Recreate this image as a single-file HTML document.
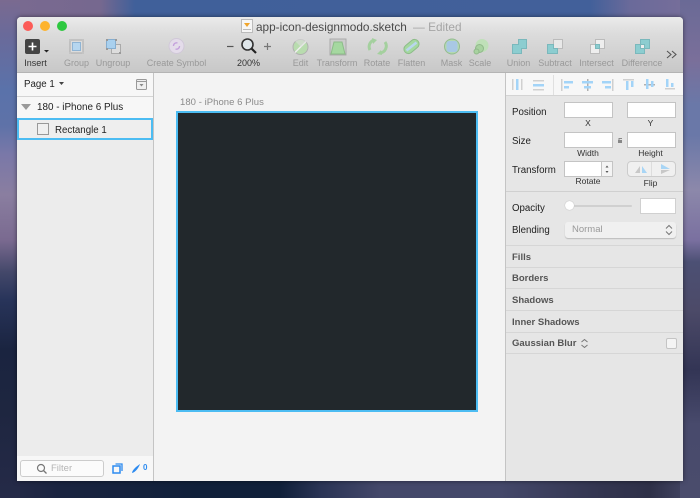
<!DOCTYPE html>
<html><head><meta charset="utf-8"><style>
html,body{margin:0;padding:0}
body{width:700px;height:498px;overflow:hidden;position:relative;font-family:"Liberation Sans",sans-serif;background:#2b3153}
.a{position:absolute;white-space:nowrap}
.st{position:absolute}
.win{position:absolute;left:17px;top:17px;width:666px;height:464px;background:#f3f3f3;border-radius:4px 4px 2px 2px;box-shadow:0 0 5px rgba(0,0,0,.5);overflow:hidden}
.tb{position:absolute;left:17px;top:17px;width:666px;height:55px;background:linear-gradient(#ebebeb,#dcdcdc 30%,#c8c8c8);border-bottom:1px solid #b4b4b4;border-radius:4px 4px 0 0}
.tl{font-size:9px;color:#999;top:58px;transform:translateX(-50%)}
.dot{position:absolute;width:10px;height:10px;border-radius:50%;top:21px}
.lb{font-size:9.7px;color:#222}
.sub{font-size:8.500px;color:#333;transform:translateX(-50%)}
.in{position:absolute;background:#fff;border:1px solid #c4c4c4;box-sizing:border-box;height:16px}
.sec{position:absolute;left:506px;width:177px;height:22px;border-bottom:1px solid #d6d6d6;box-sizing:border-box}
.sec span{position:absolute;left:6px;top:6px;font-size:9.500px;font-weight:bold;color:#555}
</style></head><body>
<div class="st" style="left:0;top:0;width:700px;height:20px;background:linear-gradient(90deg,#7a6a90 0,#76688f 100px,#40609a 135px,#42609a 590px,#6a6a9a 630px,#7a6f9a 700px)"></div>
<div class="st" style="left:0;top:478px;width:700px;height:20px;background:linear-gradient(90deg,#252a48 0,#1a2440 60px,#10203a 200px,#10203a 280px,#2a3455 320px,#44486a 380px,#44486a 500px,#333550 600px,#2e3048 650px,#4a4c6c 700px)"></div>
<div class="st" style="left:0;top:0;width:20px;height:498px;background:linear-gradient(180deg,#7a6a90 0,#6a6a9a 35px,#5a72aa 90px,#5e72a8 125px,#7a78a8 155px,#8a7ea0 195px,#7a6a90 240px,#44486a 272px,#28345a 300px,#1a2440 350px,#1e2640 410px,#252a48 498px)"></div>
<div class="st" style="left:680px;top:0;width:20px;height:498px;background:linear-gradient(180deg,#6a6a96 0,#7a6f9a 60px,#6a78a8 105px,#6a78a8 135px,#8c88aa 190px,#7a70a0 240px,#4c5074 262px,#4c4a68 310px,#333555 370px,#484a6c 425px,#4a4c6c 498px)"></div>
<div class="win"></div>
<div class="tb"></div>
<div class="dot" style="left:23px;background:#fc5b57"></div>
<div class="dot" style="left:40px;background:#fdb32e"></div>
<div class="dot" style="left:57px;background:#2ec840"></div>

<svg class="a" style="left:241px;top:19px" width="12" height="14"><rect x=".5" y=".5" width="11" height="13" fill="#f6f6f6" stroke="#bbb"/><path d="M3 4h6l-3 4z" fill="#f0a52c"/><rect x="2" y="10" width="8" height="1" fill="#bbb"/></svg>
<div class="a" style="left:256px;top:20px;font-size:11.800px;color:#4a4a4a">app-icon-designmodo.sketch</div>
<div class="a" style="left:413px;top:20px;font-size:11.800px;color:#a5a5a5">— Edited</div>

<!-- toolbar icons -->
<svg class="a" style="left:0;top:0" width="700" height="72">
<rect x="25" y="39" width="15" height="15" rx="2" fill="#444"/><path d="M32.500 42.500v8M28.500 46.500h8" stroke="#fff" stroke-width="1.600"/><path d="M44 50h5l-2.500 2.500z" fill="#222"/>
<rect x="70" y="40" width="13" height="13" fill="#dcdcdc" stroke="#aaa"/><rect x="72.500" y="42.500" width="8" height="8" fill="#b6d6ef" stroke="#8fb4d4"/>
<g fill="#c4c4c4"><rect x="69" y="39" width="2" height="2"/><rect x="82" y="39" width="2" height="2"/><rect x="69" y="52" width="2" height="2"/><rect x="82" y="52" width="2" height="2"/></g>
<rect x="111.500" y="44.500" width="9" height="9" fill="#ddd" stroke="#aaa"/><rect x="106.500" y="39.500" width="9" height="9" fill="#a9d0ee" stroke="#86aed0"/>
<g fill="#999"><rect x="106" y="39" width="2" height="2"/><rect x="115" y="39" width="2" height="2"/><rect x="106" y="48" width="2" height="2"/><rect x="119" y="52" width="2" height="2"/></g>
<circle cx="176.500" cy="46" r="7.500" fill="#e4dcea" stroke="#d0c8d8"/><path d="M173.500 46a3 3 0 0 1 4-3M179.500 46a3 3 0 0 1-4 3" fill="none" stroke="#c4a0dc" stroke-width="1.300"/>
<path d="M227 46.500h6.500" stroke="#555" stroke-width="1.200"/>
<circle cx="247.500" cy="44.500" r="5.500" fill="#dfe6ea" stroke="#333" stroke-width="1.600"/><path d="M251.500 48.500l4.500 4.500" stroke="#222" stroke-width="2.200"/>
<path d="M264 46.500h7M267.500 43v7" stroke="#777" stroke-width="1.200"/>
<circle cx="300.500" cy="47" r="7.500" fill="#b8dcae" stroke="#b0b0b0"/><path d="M295 52.500l11-11" stroke="#eee" stroke-width="1.500"/><path d="M301 47l6-6a8 8 0 0 0-12 0z" fill="#dcdcdc" opacity=".6"/>
<rect x="330" y="39" width="16" height="16" fill="#ccc" stroke="#aaa"/><path d="M331 54l3-12h8l3 12z" fill="#a5d8a0" stroke="#8cbc88"/>
<path d="M370 50a7 7 0 0 1 4-10M385 42a7 7 0 0 1-5 11" fill="none" stroke="#a4d09e" stroke-width="3"/><path d="M373 44l4-4-5-2zM381 50l-4 4 5 1z" fill="#a4d09e"/>
<rect x="403" y="42" width="17" height="9" rx="4.500" fill="#a5d8a0" stroke="#8cbc88" transform="rotate(-40 411.500 46.500)"/><path d="M406.500 50.500l10-8" stroke="#b9d6ee" stroke-width="2.500"/>
<circle cx="452" cy="46.500" r="7.500" fill="#b4d8b0" stroke="#94bc90"/><rect x="446.500" y="41" width="11" height="11" rx="2.500" fill="#a9c8e4"/>
<circle cx="482" cy="45.500" r="6.500" fill="#bfe0b8"/><circle cx="479.500" cy="48.500" r="4" fill="#a8d2a0" stroke="#90b88a"/><circle cx="476.500" cy="51.500" r="2.500" fill="#a8d2a0" stroke="#90b88a"/>
<g stroke="#7ab8bc" fill="#8ccdd0"><path d="M518.500 39.500h8v9h-5v5h-9v-9h6z"/></g>
<rect x="553.500" y="39.500" width="9" height="9" fill="#e8e8e8" stroke="#bbb"/><path d="M547.500 44.500h6v4h4v5h-10z" fill="#8ccdd0" stroke="#7ab8bc"/>
<rect x="595.500" y="39.500" width="9" height="9" fill="#eee" stroke="#bbb"/><rect x="590.500" y="44.500" width="9" height="9" fill="#eee" stroke="#bbb"/><rect x="595.500" y="44.500" width="4" height="4" fill="#8ccdd0" stroke="#7ab8bc"/>
<rect x="640.500" y="39.500" width="9" height="9" fill="#8ccdd0" stroke="#7ab8bc"/><rect x="635.500" y="44.500" width="9" height="9" fill="#8ccdd0" stroke="#7ab8bc"/><rect x="640.500" y="44.500" width="4" height="4" fill="#eee" stroke="#7ab8bc"/>
<path d="M667 51l4 3.500-4 3.500M672 51l4 3.500-4 3.500" fill="none" stroke="#555" stroke-width="1.100"/>
</svg>
<div class="a tl" style="left:35.500px;color:#333">Insert</div>
<div class="a tl" style="left:76.500px">Group</div>
<div class="a tl" style="left:113px">Ungroup</div>
<div class="a tl" style="left:176.500px">Create Symbol</div>
<div class="a tl" style="left:248.500px;color:#333">200%</div>
<div class="a tl" style="left:300.500px">Edit</div>
<div class="a tl" style="left:337px">Transform</div>
<div class="a tl" style="left:377px">Rotate</div>
<div class="a tl" style="left:411.500px">Flatten</div>
<div class="a tl" style="left:451.500px">Mask</div>
<div class="a tl" style="left:480px">Scale</div>
<div class="a tl" style="left:518.500px">Union</div>
<div class="a tl" style="left:555px">Subtract</div>
<div class="a tl" style="left:596.500px">Intersect</div>
<div class="a tl" style="left:642px">Difference</div>

<!-- left sidebar -->
<div class="a" style="left:17px;top:73px;width:136px;height:408px;background:#ececec;border-right:1px solid #c4c4c4"></div>
<div class="a" style="left:17px;top:73px;width:136px;height:23px;background:#f7f7f7;border-bottom:1px solid #d4d4d4"></div>
<div class="a" style="left:24px;top:79px;font-size:9.700px;color:#222">Page 1</div>
<svg class="a" style="left:0;top:73px" width="153" height="23"><path d="M59 9h5l-2.500 3z" fill="#444"/><rect x="136.500" y="6.500" width="10" height="10" rx="1" fill="#efefef" stroke="#999"/><path d="M136.500 8.500h10" stroke="#999"/><path d="M139.500 11h4l-2 2.500z" fill="#888"/></svg>
<div class="a" style="left:17px;top:97px;width:136px;height:21px;background:#f7f7f7"></div>
<svg class="a" style="left:20px;top:104px" width="12" height="7"><path d="M1 0h10l-5 6z" fill="#9a9a9a"/></svg>
<div class="a" style="left:37px;top:102px;font-size:9.900px;color:#222">180 - iPhone 6 Plus</div>
<div class="a" style="left:17px;top:118px;width:136px;height:22px;box-sizing:border-box;background:#eee;border:2px solid #4cbcf2"></div>
<div class="a" style="left:37px;top:123px;width:10px;height:10px;background:#f0f0f0;border:1px solid #999"></div>
<div class="a" style="left:55px;top:125px;font-size:9.700px;color:#222">Rectangle 1</div>
<div class="a" style="left:17px;top:456px;width:136px;height:25px;background:#f7f7f7"></div>
<div class="a" style="left:20px;top:460px;width:84px;height:17px;box-sizing:border-box;background:#fbfbfb;border:1px solid #ccc;border-radius:3px"></div>
<svg class="a" style="left:36px;top:463px" width="12" height="12"><circle cx="5" cy="5" r="3.500" fill="none" stroke="#777" stroke-width="1.200"/><path d="M7.500 7.500l3 3" stroke="#777" stroke-width="1.300"/></svg>
<div class="a" style="left:51px;top:463px;font-size:9.500px;color:#b5b5b5">Filter</div>
<svg class="a" style="left:111px;top:462px" width="40" height="14"><rect x="2" y="4" width="7" height="7" fill="none" stroke="#2d8bf0" stroke-width="1.500"/><path d="M4.500 2h6.500v7" fill="none" stroke="#2d8bf0" stroke-width="1.300"/><path d="M21 11c0-3 5-7 8-9-1 3-4 8-8 9z" fill="#2d8bf0"/></svg>
<div class="a" style="left:143px;top:463px;font-size:8px;font-weight:bold;color:#2d8bf0">0</div>

<!-- canvas -->
<div class="a" style="left:180px;top:97px;font-size:9.500px;color:#8a8a8a;letter-spacing:.05px">180 - iPhone 6 Plus</div>
<div class="a" style="left:176px;top:111px;width:302px;height:301px;box-sizing:border-box;background:#22282c;border:2px solid #4cbcf2"></div>

<!-- right panel -->
<div class="a" style="left:505px;top:73px;width:178px;height:408px;background:#e6e6e6;border-left:1px solid #c4c4c4;box-sizing:border-box"></div>
<div class="a" style="left:506px;top:73px;width:177px;height:22px;background:#f7f7f7;border-bottom:1px solid #d4d4d4"></div>
<svg class="a" style="left:0;top:0" width="683" height="96" fill="#a3d4f8">
<path d="M553.500 75V95" stroke="#e0e0e0"/>
<rect x="512" y="79" width="1.500" height="11" fill="#d0d0d0"/><rect x="516" y="79" width="2.500" height="11"/><rect x="521" y="79" width="1.500" height="11" fill="#d0d0d0"/>
<rect x="533" y="80" width="11" height="1.500" fill="#d0d0d0"/><rect x="533" y="84" width="11" height="2.500"/><rect x="533" y="89" width="11" height="1.500" fill="#d0d0d0"/>
<rect x="561" y="79" width="1.500" height="12" fill="#cfcfcf"/><rect x="564" y="81" width="9" height="2.500"/><rect x="564" y="86" width="5" height="2.500"/>
<rect x="587" y="79" width="1.500" height="12" fill="#b0b0b0"/><rect x="582" y="81" width="11" height="2.500"/><rect x="584" y="86" width="7" height="2.500"/>
<rect x="612" y="79" width="1.500" height="12" fill="#cfcfcf"/><rect x="602" y="81" width="9" height="2.500"/><rect x="605" y="86" width="6" height="2.500"/>
<rect x="623" y="79" width="11" height="1.500" fill="#cfcfcf"/><rect x="626" y="81" width="2.500" height="9"/><rect x="631" y="81" width="2.500" height="6"/>
<rect x="644" y="84" width="11" height="1.500" fill="#b0b0b0"/><rect x="646" y="79" width="2.500" height="10"/><rect x="651" y="81" width="2.500" height="6"/>
<rect x="665" y="88" width="10" height="1.500" fill="#cfcfcf"/><rect x="666" y="79" width="2.500" height="8"/><rect x="671" y="83" width="2.500" height="4"/>
</svg>
<div class="a lb" style="left:512px;top:107px">Position</div>
<div class="a lb" style="left:512px;top:136px">Size</div>
<div class="a lb" style="left:512px;top:165px">Transform</div>
<div class="a lb" style="left:512px;top:203px">Opacity</div>
<div class="a lb" style="left:512px;top:225px">Blending</div>
<div class="in" style="left:564px;top:102px;width:49px"></div>
<div class="in" style="left:627px;top:102px;width:49px"></div>
<div class="in" style="left:564px;top:132px;width:49px"></div>
<div class="in" style="left:627px;top:132px;width:49px"></div>
<div class="in" style="left:564px;top:161px;width:49px"></div>
<div class="in" style="left:601px;top:161px;width:12px;background:#f4f4f4"></div>
<svg class="a" style="left:601px;top:161px" width="13" height="16"><path d="M4.500 6.500l1.500-2 1.500 2zM4.500 10l1.500 2 1.500-2z" fill="#555"/></svg>
<div class="a sub" style="left:588px;top:118px">X</div>
<div class="a sub" style="left:650.500px;top:118px">Y</div>
<div class="a sub" style="left:588px;top:148px">Width</div>
<div class="a sub" style="left:650.500px;top:148px">Height</div>
<div class="a sub" style="left:588px;top:176px">Rotate</div>
<div class="a sub" style="left:650.500px;top:178px">Flip</div>
<svg class="a" style="left:617px;top:137px" width="7" height="7"><rect x="1" y="3" width="4" height="3" fill="#888"/><path d="M2 3V1.500h3" fill="none" stroke="#888"/></svg>
<div class="a" style="left:627px;top:161px;width:49px;height:16px;box-sizing:border-box;background:#f0f0f0;border:1px solid #ccc;border-radius:4px"></div>
<svg class="a" style="left:627px;top:161px" width="49" height="16"><path d="M24.500 1v14" stroke="#ddd"/><path d="M13 5v7H8z" fill="#c8c8c8"/><path d="M15 5l5 7h-5z" fill="#a8d5f5"/><path d="M34 3l9 5H34z" fill="#a8d5f5"/><path d="M34 9h9l-9 4z" fill="#c8c8c8"/></svg>
<div class="a" style="left:506px;top:191px;width:177px;height:1px;background:#d0d0d0"></div>
<div class="a" style="left:574px;top:205px;width:58px;height:2px;background:#d0d0d0;border-radius:1px"></div>
<div class="a" style="left:565px;top:201px;width:9px;height:9px;border-radius:50%;background:#fff;box-shadow:0 0 1px #999"></div>
<div class="in" style="left:640px;top:198px;width:36px;height:16px;border-color:#d0d0d0"></div>
<div class="a" style="left:565px;top:222px;width:111px;height:16px;box-sizing:border-box;background:#f0f0f0;border-radius:3px;box-shadow:0 1px 1px #bbb;font-size:9.500px;color:#999;padding:2px 0 0 7px">Normal</div>
<svg class="a" style="left:665px;top:224px" width="8" height="12"><path d="M1 4.500L4 1.500 7 4.500M1 7.500L4 10.500 7 7.500" fill="none" stroke="#777"/></svg>
<div class="a" style="left:506px;top:245px;width:177px;height:1px;background:#d6d6d6"></div>
<div class="sec" style="top:246px"><span>Fills</span></div>
<div class="sec" style="top:267px"><span>Borders</span></div>
<div class="sec" style="top:289px"><span>Shadows</span></div>
<div class="sec" style="top:311px"><span>Inner Shadows</span></div>
<div class="sec" style="top:332px"><span>Gaussian Blur</span></div>
<svg class="a" style="left:580px;top:338px" width="9" height="11"><path d="M1.500 4L4.500 1.500 7.500 4M1.500 7L4.500 9.500 7.500 7" fill="none" stroke="#777"/></svg>
<div class="a" style="left:666px;top:338px;width:9px;height:9px;background:#f4f4f4;border:1px solid #c4c4c4;border-radius:2px"></div>
</body></html>
